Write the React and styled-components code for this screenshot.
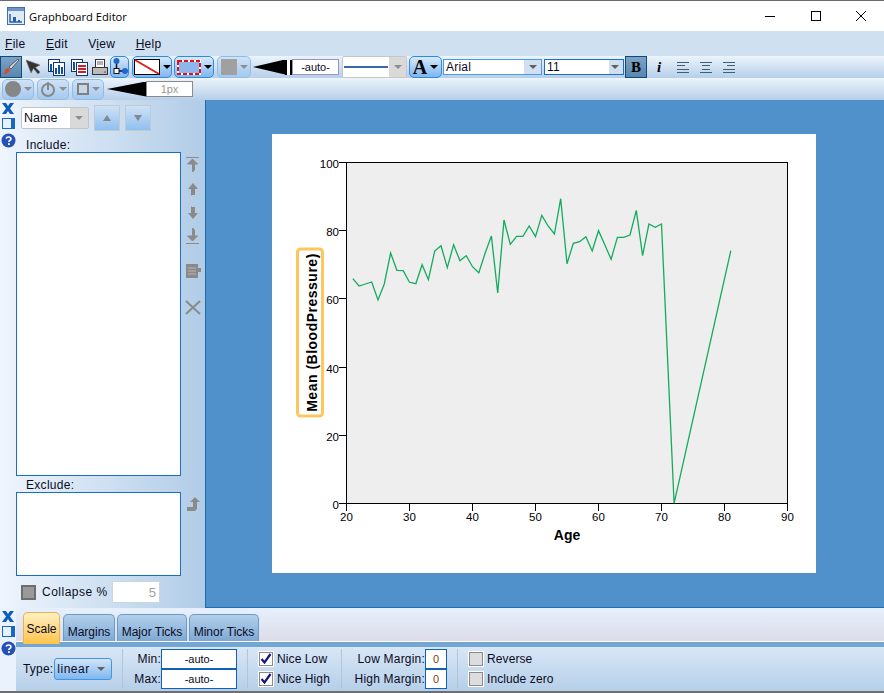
import styled, { createGlobalStyle } from "styled-components"

const GlobalStyle = createGlobalStyle`
    html, body {
        margin: 0;
        padding: 0;
        background: #ffffff;
    }
    * {
        box-sizing: border-box;
    }
`

const FONT = `"Liberation Sans", Arial, sans-serif`

// [age, y in the card's own pixels]
const SERIES = [
    [21, 144.7], [22, 152], [23, 150], [24, 148], [25, 166], [26, 150], [27, 119], [28, 136.3], [29, 136.7], [30, 148.3],
    [31, 149.7], [32, 130.7], [33, 145.7], [34, 117], [35, 111.7], [36, 133.7], [37, 110.7], [38, 126.7], [39, 121.7], [40, 132.7],
    [41, 138.7], [42, 119.3], [43, 102], [44, 159], [45, 86], [46, 110.3], [47, 102.3], [48, 102.3], [49, 92], [50, 102.7],
    [51, 81.3], [52, 92], [53, 100], [54, 64.7], [55, 129.7], [56, 109.3], [57, 107.7], [58, 102.7], [59, 117], [60, 96.7],
    [61, 110.7], [62, 125.3], [63, 103.3], [64, 103.3], [65, 101], [66, 76.3], [67, 121.7], [68, 90], [69, 93.3], [70, 90],
    [72, 369.3], [81, 116.7],
]

const ageToX = (age) => 74.5 + (age - 20) * 6.3
const valueToY = (v) => 369.5 - v * 3.41

export default function App() {
    return (
        <Window>
            <GlobalStyle />
            <TitleBar>
                <AppIcon />
                <TitleText>Graphboard Editor</TitleText>
                <Caption>
                    <CaptionBtn><svg width="12" height="12"><path d="M1 6.5h10" stroke="#000" /></svg></CaptionBtn>
                    <CaptionBtn><svg width="12" height="12"><rect x="1.5" y="1.5" width="9" height="9" fill="none" stroke="#000" /></svg></CaptionBtn>
                    <CaptionBtn><svg width="12" height="12"><path d="M1 1l10 10M11 1L1 11" stroke="#000" /></svg></CaptionBtn>
                </Caption>
            </TitleBar>
            <MenuBar>
                <MenuItem><u>F</u>ile</MenuItem>
                <MenuItem><u>E</u>dit</MenuItem>
                <MenuItem>V<u>i</u>ew</MenuItem>
                <MenuItem><u>H</u>elp</MenuItem>
            </MenuBar>
            <ToolRow>
                <SelectedTool $w={22}><BrushIcon /></SelectedTool>
                <PlainTool $w={20} $ml={1}><ArrowIcon /></PlainTool>
                <PlainTool $w={23} $ml={2}><ChartDocIcon /></PlainTool>
                <PlainTool $w={23}><TableDocIcon /></PlainTool>
                <PlainTool $w={18}><PrintIcon /></PlainTool>
                <RoundTool $w={19} $ml={1}><LinkIcon /></RoundTool>
                <RoundTool $w={40} $ml={3}><LineColorIcon /><Caret /></RoundTool>
                <RoundTool $w={40} $ml={2}><FillColorIcon /><Caret /></RoundTool>
                <RoundTool $w={34} $ml={3} $off><GraySwatch /><Caret $off /></RoundTool>
                <WedgeBox $ml={2}>
                    <Wedge $w={32} />
                    <WedgeHandle />
                </WedgeBox>
                <AutoInput>-auto-</AutoInput>
                <LineCombo>
                    <ComboValue><LineSample /></ComboValue>
                    <ComboArrow $w={17}><Caret $off /></ComboArrow>
                </LineCombo>
                <RoundTool $w={33} $ml={2}><BigA>A</BigA><Caret /></RoundTool>
                <FontCombo $w={99} $ml={1}>
                    <span>Arial</span>
                    <Caret $gray />
                </FontCombo>
                <FontCombo $w={80} $ml={2} $strong>
                    <span>11</span>
                    <Caret $gray />
                </FontCombo>
                <SelectedTool $w={22} $ml={1}><BoldB>B</BoldB></SelectedTool>
                <PlainTool $w={24}><ItalicI>i</ItalicI></PlainTool>
                <PlainTool $w={23}><AlignIcon lines={[[0, 12], [0, 8], [0, 12], [0, 12]]} /></PlainTool>
                <PlainTool $w={23}><AlignIcon lines={[[0, 12], [2, 8], [2, 8], [0, 12]]} /></PlainTool>
                <PlainTool $w={23}><AlignIcon lines={[[0, 12], [4, 8], [0, 12], [0, 12]]} /></PlainTool>
            </ToolRow>
            <ToolRow $second>
                <RoundTool $w={32} $ml={2} $off $short><GrayDot /><Caret $off /></RoundTool>
                <RoundTool $w={32} $ml={3} $off $short><PowerIcon /><Caret $off /></RoundTool>
                <RoundTool $w={32} $ml={3} $off $short><GraySquare /><Caret $off /></RoundTool>
                <WedgeBox $ml={3}>
                    <Wedge $w={39} />
                </WedgeBox>
                <PxInput>1px</PxInput>
            </ToolRow>
            <Middle>
                <SidePanel>
                    <StripIcons />
                    <SideContent>
                        <SortRow>
                            <SortCombo>
                                <SortValue>Name</SortValue>
                                <ComboArrow $w={18}><Caret $off /></ComboArrow>
                            </SortCombo>
                            <SortBtn><Tri $up /></SortBtn>
                            <SortBtn><Tri /></SortBtn>
                        </SortRow>
                        <ListLabel $mt={7}>Include:</ListLabel>
                        <ListRow>
                            <ListBox $h={324} />
                            <MoveButtons>
                                <MoveIcon kind="top" />
                                <MoveIcon kind="up" />
                                <MoveIcon kind="down" />
                                <MoveIcon kind="bottom" />
                                <MoveIcon kind="sheet" />
                                <MoveIcon kind="cross" />
                            </MoveButtons>
                        </ListRow>
                        <ListLabel $mt={2}>Exclude:</ListLabel>
                        <ListRow>
                            <ListBox $h={84} />
                            <MoveButtons>
                                <MoveIcon kind="back" />
                            </MoveButtons>
                        </ListRow>
                        <CollapseRow>
                            <GrayCheck />
                            <CollapseLabel>Collapse %</CollapseLabel>
                            <CollapseInput>5</CollapseInput>
                        </CollapseRow>
                    </SideContent>
                </SidePanel>
                <Canvas>
                    <Card>
                        <Chart />
                    </Card>
                </Canvas>
            </Middle>
            <Bottom>
                <BottomStrip>
                    <StripIcons />
                </BottomStrip>
                <BottomMain>
                    <TabsRow>
                        <Tab $active>Scale</Tab>
                        <Tab $w={52}>Margins</Tab>
                        <Tab $w={70}>Major Ticks</Tab>
                        <Tab $w={70}>Minor Ticks</Tab>
                    </TabsRow>
                    <TabLine />
                    <Controls>
                        <Group $w={99} $row>
                            <FieldLabel>Type:</FieldLabel>
                            <TypeCombo>linear<Caret $gray /></TypeCombo>
                        </Group>
                        <Group $w={125} $sep>
                            <StackRow><RightLabel $w={38}>Min:</RightLabel><AutoField>-auto-</AutoField></StackRow>
                            <StackRow><RightLabel $w={38}>Max:</RightLabel><AutoField>-auto-</AutoField></StackRow>
                        </Group>
                        <Group $w={94} $sep $pl={11}>
                            <StackRow><CheckBox $on /><CheckLabel>Nice Low</CheckLabel></StackRow>
                            <StackRow><CheckBox $on /><CheckLabel>Nice High</CheckLabel></StackRow>
                        </Group>
                        <Group $w={116} $sep>
                            <StackRow><RightLabel $w={83}>Low Margin:</RightLabel><ZeroField>0</ZeroField></StackRow>
                            <StackRow><RightLabel $w={83}>High Margin:</RightLabel><ZeroField>0</ZeroField></StackRow>
                        </Group>
                        <Group $w={120} $sep $pl={11}>
                            <StackRow><CheckBox /><CheckLabel>Reverse</CheckLabel></StackRow>
                            <StackRow><CheckBox /><CheckLabel>Include zero</CheckLabel></StackRow>
                        </Group>
                    </Controls>
                </BottomMain>
            </Bottom>
        </Window>
    )
}

function Chart() {
    const xTicks = [20, 30, 40, 50, 60, 70, 80, 90]
    const yTicks = [0, 20, 40, 60, 80, 100]
    const points = SERIES.map(([age, y]) => `${ageToX(age).toFixed(1)},${y}`).join(" ")
    return (
        <svg width="544" height="439" style={{ display: "block" }} fontFamily={FONT}>
            <rect x="74.5" y="28.5" width="441" height="341" fill="#eeeeee" stroke="#000" />
            {yTicks.map((v) => (
                <g key={v}>
                    <path d={`M67 ${Math.floor(valueToY(v)) + 0.5}h7`} stroke="#000" />
                    <text x="67" y={valueToY(v) + 5.5} fontSize="11.5" textAnchor="end">{v}</text>
                </g>
            ))}
            {xTicks.map((v) => (
                <g key={v}>
                    <path d={`M${Math.floor(ageToX(v)) + 0.5} 370v7`} stroke="#000" />
                    <text x={ageToX(v)} y="387" fontSize="11.5" textAnchor="middle">{v}</text>
                </g>
            ))}
            <polyline points={points} fill="none" stroke="#13ab5d" strokeWidth="1.3" />
            <text x="295" y="406" fontSize="14" fontWeight="700" textAnchor="middle">Age</text>
            <rect x="25.5" y="115" width="25" height="167" rx="3" fill="#fff" stroke="#fdc75f" strokeWidth="3" />
            <text transform="translate(44.5 198.5) rotate(-90)" fontSize="14" fontWeight="700" letterSpacing="0.5" textAnchor="middle">Mean (BloodPressure)</text>
        </svg>
    )
}

function StripIcons() {
    return (
        <Strip>
            <svg width="14" height="11" viewBox="0 0 14 11">
                <path d="M1 0h4l2 3 2-3h4L9 5.5l4 5.5H9L7 8l-2 3H1l4-5.5z" fill="#0d5cc0" />
            </svg>
            <svg width="13" height="11" viewBox="0 0 13 11">
                <rect x="0.5" y="0.5" width="12" height="10" fill="#e8f0fa" stroke="#1668c4" />
                <rect x="9" y="1" width="3" height="9" fill="#1668c4" />
            </svg>
            <svg width="15" height="15" viewBox="0 0 15 15">
                <circle cx="7.5" cy="7.5" r="7" fill="#2450b8" />
                <path d="M5.2 5.6c.3-2.2 4.7-2.2 4.7.3 0 1.5-2 1.6-2 3" fill="none" stroke="#fff" strokeWidth="1.6" />
                <rect x="7" y="10.2" width="1.8" height="1.8" fill="#fff" />
            </svg>
        </Strip>
    )
}

function AppIcon() {
    return (
        <svg width="18" height="18" viewBox="0 0 18 18" style={{ flex: "none" }}>
            <rect x="0.5" y="0.5" width="17" height="17" fill="#dfe9f7" stroke="#3d6fb5" />
            <rect x="1" y="1" width="16" height="3" fill="#6d93c9" />
            <path d="M3 7v8h12" fill="none" stroke="#2b62ad" strokeWidth="1.5" />
            <path d="M6 15v-5h3v5M11 15v-2h2v2" fill="#2b62ad" />
        </svg>
    )
}

function BrushIcon() {
    return (
        <svg width="18" height="18" viewBox="0 0 18 18">
            <path d="M16 1l1 1-8 9-2-2z" fill="#d9d9d9" stroke="#222" strokeWidth="0.6" />
            <path d="M6 10l2 2c-1 3-4 4-7 4 2-1 2-3 2-4 1-1 2-2 3-2z" fill="#d84a2a" />
        </svg>
    )
}

function ArrowIcon() {
    return (
        <svg width="16" height="16" viewBox="0 0 16 16">
            <path d="M1 1l5 13 2.5-4.5L13 15l2-2-4.5-4.5L15 6z" fill="#333" stroke="#777" strokeWidth="0.6" />
        </svg>
    )
}

function ChartDocIcon() {
    return (
        <svg width="17" height="18" viewBox="0 0 17 18">
            <rect x="0.5" y="1.5" width="11" height="12" fill="#fff" stroke="#12366f" />
            <rect x="5.5" y="4.5" width="11" height="13" fill="#fff" stroke="#12366f" />
            <path d="M2 6h2v7H2zM7 10h2v6H7zM10 7h2v9h-2zM13 9h2v7h-2z" fill="#114fa5" />
        </svg>
    )
}

function TableDocIcon() {
    return (
        <svg width="17" height="18" viewBox="0 0 17 18">
            <rect x="0.5" y="1.5" width="11" height="12" fill="#fff" stroke="#12366f" />
            <rect x="5.5" y="4.5" width="11" height="13" fill="#fff" stroke="#12366f" />
            <path d="M2 4h2v8H2z" fill="#114fa5" />
            <path d="M7 7h8v2H7zM7 10h8v2H7zM7 13h8v2H7z" fill="#c8202a" />
        </svg>
    )
}

function PrintIcon() {
    return (
        <svg width="16" height="17" viewBox="0 0 16 17">
            <rect x="3.5" y="0.5" width="9" height="8" fill="#fff" stroke="#333" />
            <path d="M5 3h6M5 5h6" stroke="#666" />
            <rect x="0.5" y="8.5" width="15" height="7" fill="#bbb" stroke="#333" />
            <path d="M12 13h2" stroke="#c8202a" />
        </svg>
    )
}

function LinkIcon() {
    return (
        <svg width="17" height="20" viewBox="0 0 17 20">
            <path d="M5.5 2v14M5.5 14H14" stroke="#111" strokeWidth="1.5" />
            <circle cx="5.5" cy="4" r="3" fill="#2566c8" />
            <rect x="3" y="11.5" width="5" height="5" fill="#fff" stroke="#111" />
            <circle cx="14" cy="14" r="3" fill="#2566c8" />
        </svg>
    )
}

function LineColorIcon() {
    return (
        <svg width="26" height="16" viewBox="0 0 26 16">
            <rect x="0.5" y="0.5" width="25" height="15" fill="#fff" stroke="#000" />
            <path d="M1 1l24 14" stroke="#e31b1b" strokeWidth="2" />
        </svg>
    )
}

function FillColorIcon() {
    return (
        <svg width="24" height="15" viewBox="0 0 24 15">
            <rect x="1" y="1" width="22" height="13" fill="#8eb6ea" stroke="#ffffff" strokeWidth="2" />
            <rect x="1" y="1" width="22" height="13" fill="none" stroke="#e01010" strokeWidth="2" strokeDasharray="4 2" />
        </svg>
    )
}

function PowerIcon() {
    return (
        <svg width="16" height="16" viewBox="0 0 16 16">
            <circle cx="8" cy="9" r="6" fill="none" stroke="#888" strokeWidth="2" />
            <path d="M8 1v8" stroke="#888" strokeWidth="2" />
        </svg>
    )
}

function AlignIcon({ lines }) {
    return (
        <svg width="12" height="11" viewBox="0 0 12 11">
            {lines.map(([x, w], i) => (
                <rect key={i} x={x} y={Math.round(i * 3.3)} width={w} height="1" fill="#3d6078" />
            ))}
        </svg>
    )
}

function CheckMark() {
    return (
        <svg width="12" height="12" viewBox="0 0 12 12" style={{ display: "block" }}>
            <path d="M1.5 6l3 3.5L10.5 1" fill="none" stroke="#15157e" strokeWidth="2.2" />
        </svg>
    )
}

function MoveIcon({ kind }) {
    const gray = "#8a8a8a"
    return (
        <MoveSlot $kind={kind}>
            <svg width="18" height="18" viewBox="0 0 18 18">
                {kind === "top" && <path d="M2 1.5h13M8.5 3l5 5h-3v6l-2 2V8h-5z" stroke={gray} fill={gray} />}
                {kind === "up" && <path d="M9 3l5 6h-3v6H8l-1 1V9H4z" fill={gray} />}
                {kind === "down" && <path d="M9 15l5-6h-3V3H8L7 2v7H4z" fill={gray} />}
                {kind === "bottom" && <path d="M2 15.5h13M8.5 13l5-5h-3V2L8.5 0v8h-5z" stroke={gray} fill={gray} />}
                {kind === "sheet" && <path d="M2 2h12v4h3v4h-3v6H2z" fill={gray} />}
                {kind === "sheet" && <path d="M4 6h8M4 9h8M4 12h8" stroke="#b7b7b7" />}
                {kind === "cross" && <path d="M2 2l14 13M16 2L2 15" stroke={gray} strokeWidth="2" />}
                {kind === "back" && <path d="M3 15v-4h6V6H6l5-5 5 5h-3v7l-2 2z" fill={gray} />}
            </svg>
        </MoveSlot>
    )
}

const Window = styled.div`
    width: 884px;
    height: 693px;
    display: flex;
    flex-direction: column;
    overflow: hidden;
    font-family: ${FONT};
    font-size: 12px;
    color: #0b0b1e;
    border-top: 1px solid #6b6b6b;
`

const TitleBar = styled.div`
    height: 30px;
    flex: none;
    display: flex;
    align-items: center;
    padding-left: 7px;
    background: #ffffff;
`

const TitleText = styled.div`
    margin-left: 4px;
    font-family: "Open Sans", sans-serif;
    font-size: 11.2px;
    color: #000000;
`

const Caption = styled.div`
    margin-left: auto;
    display: flex;
`

const CaptionBtn = styled.div`
    width: 45.5px;
    height: 30px;
    display: flex;
    align-items: center;
    justify-content: center;
`

const MenuBar = styled.div`
    height: 25px;
    flex: none;
    display: flex;
    align-items: center;
    gap: 20.4px;
    padding-left: 5px;
    background: #cfe0f1;
`

const MenuItem = styled.div`
    font-size: 12px;
    letter-spacing: 0.3px;
`

const ToolRow = styled.div`
    height: 22px;
    flex: none;
    display: flex;
    align-items: ${(props) => (props.$second ? "center" : "stretch")};
    background: linear-gradient(#edf4fc, #b6cfe9);
`

const PlainTool = styled.div`
    width: ${(props) => props.$w}px;
    margin-left: ${(props) => props.$ml || 0}px;
    flex: none;
    display: flex;
    align-items: center;
    justify-content: center;
`

const SelectedTool = styled(PlainTool)`
    border: 1px solid #0e4a80;
    background: linear-gradient(#7da3c6, #5a86ae);
`

const RoundTool = styled(PlainTool)`
    height: ${(props) => (props.$short ? 21 : 22)}px;
    gap: 3px;
    border: 1px solid ${(props) => (props.$off ? "#8fbce8" : "#2f8be0")};
    border-radius: 5px;
    background: ${(props) => (props.$off ? "linear-gradient(#cfe2f6, #a5c9ee)" : "linear-gradient(#d8e9fb, #7fb6ef)")};
`

const Caret = styled.span`
    width: 0;
    height: 0;
    flex: none;
    border-left: 4px solid transparent;
    border-right: 4px solid transparent;
    border-top: 4px solid ${(props) => (props.$off ? "#8a8f96" : props.$gray ? "#606060" : "#000000")};
`

const GraySwatch = styled.span`
    width: 16px;
    height: 16px;
    background: #a0a0a0;
`

const GrayDot = styled.span`
    width: 16px;
    height: 16px;
    border-radius: 50%;
    background: #868686;
`

const GraySquare = styled.span`
    width: 12px;
    height: 12px;
    background: #c8d6e6;
    border: 2px solid #808080;
`

const WedgeBox = styled.div`
    height: 15px;
    flex: none;
    align-self: center;
    display: flex;
    margin-left: ${(props) => props.$ml}px;
`

const Wedge = styled.div`
    width: ${(props) => props.$w}px;
    height: 15px;
    background: #000000;
    clip-path: polygon(0 50%, 100% 0, 100% 100%);
`

const WedgeHandle = styled.div`
    width: 7px;
    height: 15px;
    background: #ffffff;
    border-left: 2px solid #000000;
    border-right: 2px solid #000000;
`

const AutoInput = styled.div`
    width: 47px;
    height: 16px;
    flex: none;
    align-self: center;
    display: flex;
    align-items: center;
    justify-content: center;
    font-size: 11px;
    background: #ffffff;
    border: 1px solid #9a93c4;
`

const PxInput = styled(AutoInput)`
    color: #999999;
    border-color: #8b8b8b;
`

const LineCombo = styled.div`
    width: 65px;
    margin-left: 3px;
    flex: none;
    display: flex;
    border: 1px solid #c7c7c7;
    border-radius: 2px;
    background: #ffffff;
`

const ComboValue = styled.div`
    flex: 1;
    display: flex;
    align-items: center;
    padding: 0 1px;
`

const ComboArrow = styled.div`
    width: ${(props) => props.$w}px;
    flex: none;
    display: flex;
    align-items: center;
    justify-content: center;
    background: #d9d9d9;
`

const LineSample = styled.div`
    width: 100%;
    height: 2px;
    background: #3867ad;
`

const BigA = styled.span`
    font-family: "Liberation Serif", serif;
    font-weight: 700;
    font-size: 20px;
    line-height: 20px;
    color: #000000;
`

const FontCombo = styled.div`
    width: ${(props) => props.$w}px;
    height: 16px;
    margin-left: ${(props) => props.$ml}px;
    flex: none;
    align-self: center;
    display: flex;
    align-items: center;
    justify-content: space-between;
    padding: 0 4px 0 2px;
    background: linear-gradient(to right, #ffffff 82%, #cfe0f1 82%);
    border: 1px solid ${(props) => (props.$strong ? "#1b6fc7" : "#4a9be6")};
    font-size: 12px;
    letter-spacing: 0.2px;
`

const BoldB = styled.span`
    font-family: "Liberation Serif", serif;
    font-weight: 700;
    font-size: 15px;
    color: #000000;
`

const ItalicI = styled(BoldB)`
    font-style: italic;
`

const Middle = styled.div`
    height: 508px;
    flex: none;
    display: flex;
`

const SidePanel = styled.div`
    width: 205px;
    flex: none;
    display: flex;
    background: linear-gradient(to right, #eef5fd, #b1cce7);
`

const Strip = styled.div`
    width: 16px;
    flex: none;
    display: flex;
    flex-direction: column;
    align-items: center;
    gap: 4px;
    padding-top: 3px;
`

const SideContent = styled.div`
    flex: 1;
    display: flex;
    flex-direction: column;
    min-width: 0;
`

const SortRow = styled.div`
    display: flex;
    align-items: center;
    height: 26px;
    margin-top: 5px;
    padding-left: 5px;
    gap: 5px;
`

const SortCombo = styled.div`
    width: 68px;
    height: 22px;
    display: flex;
    border: 1px solid #c4c4c4;
    border-radius: 2px;
    background: #ffffff;
`

const SortValue = styled.div`
    flex: 1;
    display: flex;
    align-items: center;
    padding-left: 2px;
    font-size: 12.5px;
`

const SortBtn = styled.div`
    width: 26px;
    height: 26px;
    display: flex;
    align-items: center;
    justify-content: center;
    border: 1px solid #c3c9d1;
    background: linear-gradient(#cfe1f5, #8fc0f0);
`

const Tri = styled.span`
    width: 0;
    height: 0;
    border-left: 4px solid transparent;
    border-right: 4px solid transparent;
    border-${(props) => (props.$up ? "bottom" : "top")}: 6px solid #808890;
`

const ListLabel = styled.div`
    height: 14px;
    margin-top: ${(props) => props.$mt}px;
    padding-left: 10px;
    line-height: 14px;
    letter-spacing: 0.3px;
`

const ListRow = styled.div`
    display: flex;
`

const ListBox = styled.div`
    width: 165px;
    height: ${(props) => props.$h}px;
    flex: none;
    background: #ffffff;
    border: 1px solid #1a6fc4;
`

const MoveButtons = styled.div`
    flex: 1;
    display: flex;
    flex-direction: column;
    align-items: center;
    gap: 6px;
    padding-top: 4px;
`

const MoveSlot = styled.div`
    height: 18px;
    display: flex;
    margin-top: ${(props) => (props.$kind === "sheet" ? 10 : props.$kind === "cross" ? 13 : 0)}px;
`

const CollapseRow = styled.div`
    display: flex;
    align-items: center;
    margin-top: 5px;
    padding-left: 5px;
`

const GrayCheck = styled.div`
    width: 15px;
    height: 15px;
    border: 2px solid #6e6e6e;
    background: #9a9a9a;
`

const CollapseLabel = styled.div`
    width: 70px;
    margin-left: 6px;
    letter-spacing: 0.5px;
`

const CollapseInput = styled.div`
    width: 48px;
    height: 22px;
    display: flex;
    align-items: center;
    justify-content: flex-end;
    padding-right: 3px;
    font-size: 13px;
    color: #a0a0a0;
    background: #ffffff;
    border: 1px solid #c9d6e4;
`

const Canvas = styled.div`
    flex: 1;
    display: flex;
    align-items: center;
    justify-content: center;
    padding-right: 2px;
    background: #5191cb;
    border-left: 1px solid #1e6bb0;
    border-bottom: 1px solid #1e6bb0;
`

const Card = styled.div`
    width: 544px;
    height: 439px;
    background: #ffffff;
`

const Bottom = styled.div`
    flex: 1;
    display: flex;
    background: #eaf3fd;
    border-bottom: 2px solid #6e6e6e;
`

const BottomStrip = styled.div`
    width: 16px;
    flex: none;
`

const BottomMain = styled.div`
    flex: 1;
    display: flex;
    flex-direction: column;
    min-width: 0;
`

const TabsRow = styled.div`
    height: 34px;
    flex: none;
    display: flex;
    align-items: flex-end;
    gap: 2px;
    padding-left: 7px;
    background: linear-gradient(#e6f0fc, #dcdce8);
    border-bottom: 1px solid #ffffff;
`

const Tab = styled.div`
    width: ${(props) => (props.$active ? 37 : props.$w)}px;
    height: ${(props) => (props.$active ? 32 : 27)}px;
    display: flex;
    align-items: center;
    justify-content: center;
    margin-bottom: ${(props) => (props.$active ? -3 : 0)}px;
    margin-right: ${(props) => (props.$active ? 1 : 0)}px;
    padding-top: ${(props) => (props.$active ? 0 : 7)}px;
    border: 1px solid ${(props) => (props.$active ? "#e8b24c" : "#6b9cc9")};
    border-bottom: none;
    border-radius: 5px 5px 0 0;
    background: ${(props) => (props.$active ? "linear-gradient(#fff0c4, #ffc44a)" : "linear-gradient(#b3d0ec, #7ea9d3)")};
    position: relative;
`

const TabLine = styled.div`
    height: 5px;
    flex: none;
    background: #74a6d4;
`

const Controls = styled.div`
    flex: 1;
    display: flex;
    padding-top: 2px;
    padding-left: 7px;
    background: linear-gradient(#d9e7f6, #b5cfe9);
`

const Group = styled.div`
    width: ${(props) => props.$w}px;
    height: 40px;
    flex: none;
    display: flex;
    flex-direction: ${(props) => (props.$row ? "row" : "column")};
    align-items: ${(props) => (props.$row ? "center" : "stretch")};
    padding-left: ${(props) => props.$pl || 0}px;
    border-left: ${(props) => (props.$sep ? "1px solid #b6c3d1" : "none")};
`

const FieldLabel = styled.div`
    letter-spacing: 0.2px;
`

const TypeCombo = styled.div`
    width: 58px;
    height: 22px;
    margin-left: 1px;
    display: flex;
    align-items: center;
    justify-content: space-between;
    padding: 0 6px 0 2px;
    letter-spacing: 0.5px;
    border: 1px solid #3f95e6;
    border-radius: 3px;
    background: linear-gradient(#d3e5f9, #80b7ef);
`

const StackRow = styled.div`
    height: 20px;
    display: flex;
    align-items: center;
`

const RightLabel = styled.div`
    width: ${(props) => props.$w}px;
    flex: none;
    text-align: right;
    letter-spacing: 0.2px;
`

const AutoField = styled.div`
    width: 76px;
    height: 20px;
    display: flex;
    align-items: center;
    justify-content: center;
    font-size: 11px;
    background: #ffffff;
    border: 1px solid #0f62b8;
`

const ZeroField = styled(AutoField)`
    width: 22px;
    color: #804010;
`

const CheckBoxFrame = styled.div`
    width: 14px;
    height: 14px;
    flex: none;
    border: 1px solid #8a8a8a;
    outline: 1px solid #ffffff;
    background: ${(props) => (props.$on ? "#ffffff" : "#dddddd")};
`

function CheckBox({ $on }) {
    return <CheckBoxFrame $on={$on}>{$on && <CheckMark />}</CheckBoxFrame>
}

const CheckLabel = styled.div`
    margin-left: 4px;
    letter-spacing: 0.1px;
`
